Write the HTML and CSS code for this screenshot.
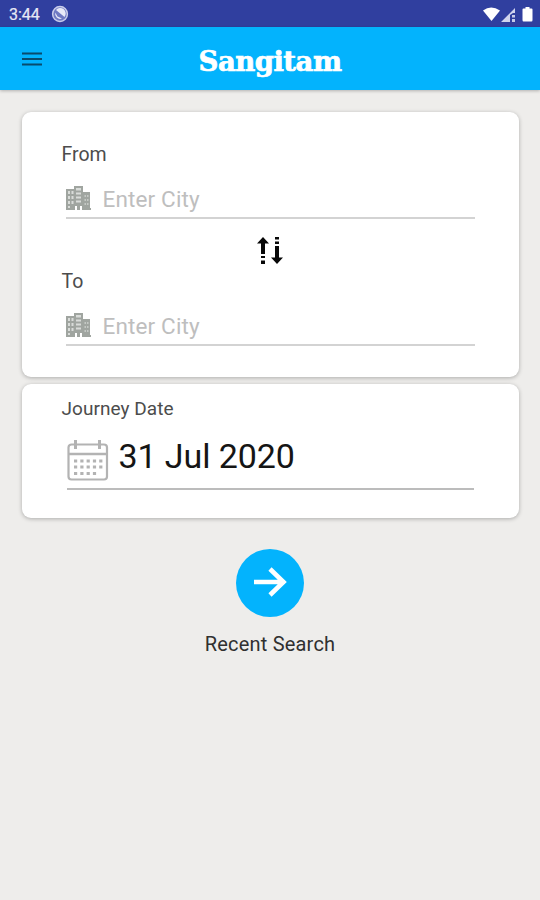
FILE: index.html
```html
<!DOCTYPE html>
<html lang="en">
<head>
<meta charset="utf-8">
<title>Sangitam</title>
<link rel="stylesheet" href="styles.css">
</head>
<body>
<svg class="defs" width="0" height="0">
  <symbol id="city" viewBox="0 0 27 26">
    <path fill="#a0a5a0" d="M1 4h8V1h9v6h7v16h1v2h-9v-4h-2v4h-3v-4h-2v4H1z"/>
    <path fill="#d9dcd9" d="M3 6h2v3H3zM6.500 6h2v3h-2zM3 11h2v3H3zM6.500 11h2v3h-2zM3 16h2v3H3zM6.500 16h2v3h-2zM3 21h2v2H3zM11 3h5v2.500h-5zM11 7.500h5v2h-5zM11 11.500h5v2h-5zM11 15.500h5v2h-5z"/>
    <path fill="#c4c8c4" d="M19.500 10h1.500v2h-1.500zM22 10h1.500v2H22zM19.500 14h1.500v2h-1.500zM22 14h1.500v2H22zM19.500 18h1.500v2h-1.500zM22 18h1.500v2H22z"/>
  </symbol>
</svg>
<div class="status">
  <span class="time">3:44</span>
  <svg class="sync" width="18" height="18" viewBox="0 0 18 18"><circle cx="9" cy="9" r="7.400" fill="#6f7ac3" stroke="#c9cdea" stroke-width="1.500"/><path d="M5 5a5.400 5.400 0 0 1 8.500 7zM4.300 7.500l2.200 4 4.500 2a5 5 0 0 1-6.700-6z" fill="#e8eaf8"/></svg>
  <svg class="signals" width="52" height="18" viewBox="0 0 52 18" fill="#fff">
    <path d="M1 5.500q8-6 17 0L9.500 16z"/>
    <path d="M19 17L33 3v5h-2l-3 2v7z" fill="#d0d4ee"/><path d="M30 10h3v2.500h-3zM30 14h3v3h-3z" fill="#c5cae9"/>
    <path d="M43.500 2h4v1.500h2q1 0 1 1V15q0 1.500-1 1.500h-8q-1 0-1-1.500V4.500q0-1 1-1h2z"/>
  </svg>
</div>
<header class="bar">
  <svg class="menu" width="20" height="16" viewBox="0 0 20 16"><path d="M0 2.400h20M0 8h20M0 13.600h20" stroke="#094b6c" stroke-width="2"/></svg>
  <h1 class="brand">Sangitam</h1>
</header>
<main>
  <section class="card route">
    <div class="label">From</div>
    <div class="field"><svg class="city"><use href="#city"/></svg><span>Enter City</span></div>
    <svg class="swap" width="28" height="30" viewBox="0 0 28 30" fill="#080808"><path d="M7 1l6 6.500H9V18H5V7.500H1zM5 20h4v2H5zM5 24.500h4V28H5zM19 1h4v2.500h-4zM19 5.500h4v2.500h-4zM19 10h4v11.500h4L21 28l-6-6.500h4z"/></svg>
    <div class="label">To</div>
    <div class="field"><svg class="city"><use href="#city"/></svg><span>Enter City</span></div>
  </section>
  <section class="card journey">
    <div class="label journey-label">Journey Date</div>
    <div class="date">
      <svg width="42" height="42" viewBox="0 0 42 42" fill="none" stroke="#b3b3b3" stroke-width="2.200"><rect x="1.500" y="4.500" width="38.500" height="35" rx="3"/><path d="M2 14h38" stroke-width="2.500"/><path d="M8.500 0v9M32.500 0v9" stroke-width="3"/><path d="M7 21h30M7 27h30M7 33.500h24" stroke-width="3.200" stroke-dasharray="3.200 3.100"/></svg>
      <span>31 Jul 2020</span>
    </div>
  </section>
  <button class="go" aria-label="Search"><svg width="68" height="68" viewBox="0 0 68 68" fill="none" stroke="#fff" stroke-width="4.600"><path d="M18 33h30M34 20l13.500 13L34 46"/></svg></button>
  <div class="recent">Recent Search</div>
</main>
</body>
</html>
```
FILE: styles.css
```css
* { box-sizing: border-box; }
body { margin: 0; width: 540px; height: 900px; overflow: hidden; background: #eeedeb; font-family: Roboto, sans-serif; }
.defs { display: block; }
.status { height: 27px; background: #303f9f; display: flex; align-items: center; padding: 1px 6px 0 9px; color: #e6e8f5; }
.time { font-size: 16px; width: 42px; -webkit-text-stroke: .2px #e6e8f5; }
.signals { margin-left: auto; }
.bar { height: 63px; background: #03b3fd; display: grid; grid-template-columns: 60px 1fr 60px; align-items: center; box-shadow: 0 1px 3px rgba(0, 0, 0, .25); }
.menu { margin-left: 22px; }
.brand { margin: 4px 0 0; color: #fff; text-align: center; font: bold 27.500px/40px "DejaVu Serif", serif; letter-spacing: -.5px; -webkit-text-stroke: .7px #fff; }
main { display: flex; flex-direction: column; align-items: center; padding-top: 22px; }
.card { width: 497px; background: #fff; border-radius: 9px; box-shadow: 0 1px 4px rgba(0, 0, 0, .28); padding-left: 39px; }
.route { height: 265px; padding-top: 31px; }
.label { padding-left: 1px; font-size: 19.500px; line-height: 24px; color: #4c4c4c; letter-spacing: 0; }
.field { margin: 13px 0 0 5px; width: 409px; height: 39px; border-bottom: 2px solid #d3d3d3; display: flex; align-items: center; color: #bebebe; font-size: 22.500px; letter-spacing: .15px; }
.field span { padding-top: 1px; }
.city { width: 27px; height: 26px; margin: -1px 11px 0 -1px; }
.swap { display: block; margin: 17px 0 4px 195px; }
.journey { height: 134px; margin-top: 7px; padding-top: 13px; }
.journey-label { font-size: 19px; letter-spacing: .05px; }
.date { margin: 16px 0 0 6px; width: 407px; height: 53px; border-bottom: 2px solid #bcbcbc; display: flex; gap: 10px; align-items: flex-start; padding-top: 3px; color: #151515; font-size: 34px; line-height: 38px; letter-spacing: -.1px; }
.date span { margin-top: -3px; }
.go { width: 68px; height: 68px; margin-top: 31px; padding: 0; border: 0; border-radius: 50%; background: #03b3fd; }
.go svg { display: block; }
.recent { margin-top: 15px; font-size: 20px; line-height: 24px; letter-spacing: .2px; color: #303030; }
```
